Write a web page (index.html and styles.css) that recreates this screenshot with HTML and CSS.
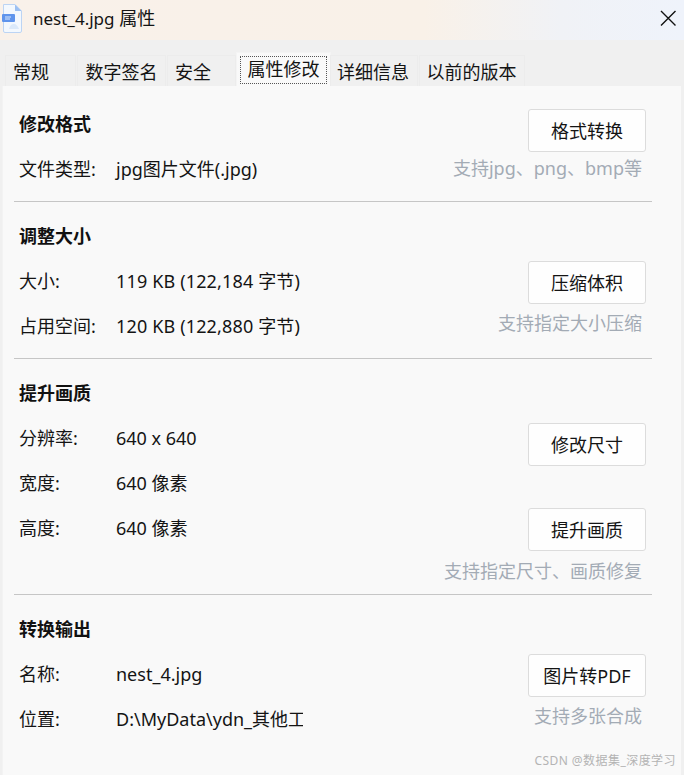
FILE: index.html
```html
<!DOCTYPE html>
<html lang="zh-CN">
<head>
<meta charset="utf-8">
<title>nest_4.jpg 属性</title>
<link rel="stylesheet" href="styles.css">
</head>
<body>
<div class="window">
  <header class="titlebar">
    <svg class="file-icon" width="21" height="30" viewBox="0 0 21 30">
      <path d="M2.5 1.5H14L20.5 8V28a1.5 1.5 0 0 1-1.5 1.5H4A1.500 1.500 0 0 1 2.500 28Z" fill="#f3f8fe" stroke="#bcd4f4"/>
      <path d="M14 1.500V8H20.500Z" fill="#9cc0f2"/>
      <rect x="1" y="11" width="13" height="8" rx="1" fill="#5f94ec"/>
      <path d="M4 14h6M4 16h5" stroke="#dbe8fb" stroke-width="1"/>
      <path d="M8 26c1-4 3-5 5-5s4 2 5 5Z" fill="#dbe9fa"/>
    </svg>
    <span class="title"><span class="title-name">nest_4.jpg</span> 属性</span>
    <svg class="close" width="16" height="16" viewBox="0 0 16 16"><path d="M1 1L15.500 15.500M15.500 1L1 15.500" stroke="#111" stroke-width="1.400" fill="none"/></svg>
  </header>
  <nav class="tabs">
    <span class="tab tab-a">常规</span>
    <span class="tab tab-b">数字签名</span>
    <span class="tab tab-c">安全</span>
    <span class="tab tab-active"><span class="focus">属性修改</span></span>
    <span class="tab tab-d">详细信息</span>
    <span class="tab tab-e">以前的版本</span>
  </nav>
  <main class="panel">
    <section class="group group-1">
      <div class="info">
        <h2>修改格式</h2>
        <div class="row"><span class="label">文件类型:</span><span>jpg图片文件(.jpg)</span></div>
      </div>
      <div class="actions">
        <button class="btn">格式转换</button>
        <p class="hint">支持jpg、png、bmp等</p>
      </div>
    </section>
    <section class="group group-2">
      <div class="info">
        <h2>调整大小</h2>
        <div class="row"><span class="label">大小:</span><span class="size">119 KB (122,184 字节)</span></div>
        <div class="row"><span class="label">占用空间:</span><span class="size">120 KB (122,880 字节)</span></div>
      </div>
      <div class="actions">
        <button class="btn">压缩体积</button>
        <p class="hint">支持指定大小压缩</p>
      </div>
    </section>
    <section class="group group-3">
      <div class="info">
        <h2>提升画质</h2>
        <div class="row"><span class="label">分辨率:</span><span>640 x 640</span></div>
        <div class="row"><span class="label">宽度:</span><span>640 像素</span></div>
        <div class="row"><span class="label">高度:</span><span>640 像素</span></div>
      </div>
      <div class="actions">
        <button class="btn">修改尺寸</button>
        <button class="btn btn-second">提升画质</button>
        <p class="hint">支持指定尺寸、画质修复</p>
      </div>
    </section>
    <section class="group group-4">
      <div class="info">
        <h2>转换输出</h2>
        <div class="row"><span class="label">名称:</span><span>nest_4.jpg</span></div>
        <div class="row"><span class="label">位置:</span><span class="path">D:\MyData\ydn_其他工</span></div>
      </div>
      <div class="actions">
        <button class="btn">图片转PDF</button>
        <p class="hint">支持多张合成</p>
      </div>
    </section>
    <div class="watermark">CSDN @数据集_深度学习</div>
  </main>
</div>
</body>
</html>
```
FILE: styles.css
```css
* { box-sizing: border-box; }
html, body { margin: 0; height: 100%; }
body {
  background: #f0f0f0;
  font-family: "Noto Sans", "Noto Sans CJK SC", sans-serif;
  font-size: 18px;
  color: #141414;
  overflow: hidden;
}
.window { width: 684px; height: 775px; display: flex; flex-direction: column; }
.titlebar {
  height: 40px;
  flex: none;
  display: flex;
  align-items: center;
  background: linear-gradient(90deg, #f9f1ea 0%, #f9f1e8 62%, #f0f2f6 82%, #eff3fb 100%);
  padding: 0 8px 0 0;
}
.file-icon { margin: -4px 11px 0 1px; }
.title { flex: 1; line-height: 24px; margin-top: -4px; }
.title-name { font-size: 17px; }
.close { margin-top: -4px; }
.tabs {
  height: 46px;
  flex: none;
  display: flex;
  align-items: flex-end;
  padding-left: 5px;
  gap: 1px;
}
.tab {
  height: 31px;
  background: #f0f0f0;
  border: 1px solid #ececec;
  border-bottom: 0;
  line-height: 33px;
  text-align: center;
  white-space: nowrap;
}
.tab-a { width: 71px; padding-right: 19px; }
.tab-b { width: 89px; }
.tab-c { width: 69px; padding-right: 17px; }
.tab-active {
  width: 95px;
  height: 34px;
  margin-left: -1px;
  padding: 3px;
  background: #f9f9f9;
  border: 1px solid #f4f4f4;
  border-bottom: 0;
}
.focus {
  display: block;
  height: 28px;
  line-height: 24px;
  border: 1px dotted #555;
}
.tab-d { width: 88px; margin-left: -2px; padding-right: 2px; }
.tab-e { width: 106px; padding-right: 1px; }
.panel {
  flex: 1;
  margin: 0 3px 0 2px;
  padding: 0 11px;
  background: #f9f9f9;
  border-left: 1px solid #f3f3f3;
  position: relative;
}
.group {
  display: flex;
  justify-content: space-between;
  width: 638px;
  border-bottom: 1px solid #c6c6c6;
  padding-left: 5px;
  padding-right: 6px;
}
.group-1 { height: 116px; }
.group-2 { height: 157px; }
.group-3 { height: 236px; }
.group-4 { border-bottom: 0; }
.info { display: flex; flex-direction: column; }
h2 {
  margin: 0;
  font-size: 18px;
  font-weight: 700;
  line-height: 24px;
  color: #111;
}
.group-1 h2 { margin-top: 26px; }
.group-2 h2, .group-3 h2, .group-4 h2 { margin-top: 22px; }
.row { display: flex; height: 24px; margin-top: 21px; line-height: 24px; white-space: nowrap; }
.label { width: 97px; flex: none; }
.size { letter-spacing: 0.15px; }
.path { width: 187px; overflow: hidden; }
.actions { display: flex; flex-direction: column; align-items: flex-end; }
.btn {
  width: 118px;
  height: 43px;
  padding: 0 0 2px;
  background: #fefefe;
  border: 1px solid #dcdcdc;
  border-radius: 3px;
  font: inherit;
  color: #141414;
}
.group-1 .btn { margin-top: 23px; }
.group-2 .btn { margin-top: 59px; }
.group-3 .btn { margin-top: 64px; }
.group-3 .btn-second { margin-top: 42px; }
.group-4 .btn { margin-top: 59px; }
.hint {
  margin: 4px 4px 0 0;
  line-height: 24px;
  color: #a3abb5;
  white-space: nowrap;
}
.group-2 .hint { margin-top: 7px; }
.group-3 .hint { margin-top: 8px; }
.group-4 .hint { margin-top: 7px; }
.watermark {
  position: absolute;
  right: 5px;
  bottom: 6px;
  font-size: 12px;
  letter-spacing: 0.45px;
  line-height: 16px;
  color: #b4b4b4;
}
```
